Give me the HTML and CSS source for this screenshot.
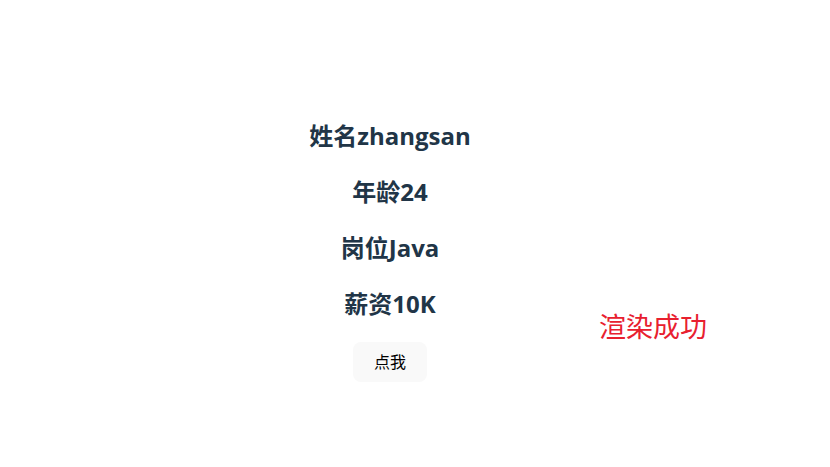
FILE: index.html
```html
<!DOCTYPE html>
<html lang="zh">
<head>
<meta charset="utf-8">
<title>App</title>
<link rel="stylesheet" href="styles.css">
</head>
<body>
<div class="page">
  <div class="col">
    <h2 class="title">姓名zhangsan</h2>
    <h2 class="title">年龄24</h2>
    <h2 class="title">岗位Java</h2>
    <h2 class="title">薪资10K</h2>
    <button class="btn" type="button">点我</button>
  </div>
  <div class="status">渲染成功</div>
</div>
</body>
</html>
```

FILE: styles.css
```css
html, body {
  margin: 0;
  padding: 0;
  background: #ffffff;
}
body {
  font-family: "Open Sans", "Noto Sans CJK SC", sans-serif;
  color: #213547;
  line-height: 1.5;
  font-size: 16px;
}
.page {
  display: flex;
  align-items: flex-start;
  padding: 98px 0 0 260px;
}
.col {
  width: 260px;
  text-align: center;
}
.title {
  font-size: 24px;
  font-weight: 700;
  line-height: 36px;
  margin: 19.92px 0;
}
.btn {
  font-family: "Noto Sans CJK SC", sans-serif;
  font-size: 16px;
  font-weight: 400;
  line-height: 19px;
  color: #000000;
  background: #f9f9f9;
  border: 1px solid transparent;
  border-radius: 8px;
  padding: 9.5px 19.5px;
  margin: 0;
  cursor: pointer;
}
.status {
  margin: 210px 0 0 79px;
  font-family: "Noto Sans CJK SC", sans-serif;
  font-size: 27px;
  line-height: 36px;
  color: #e8202f;
  white-space: nowrap;
}
```
